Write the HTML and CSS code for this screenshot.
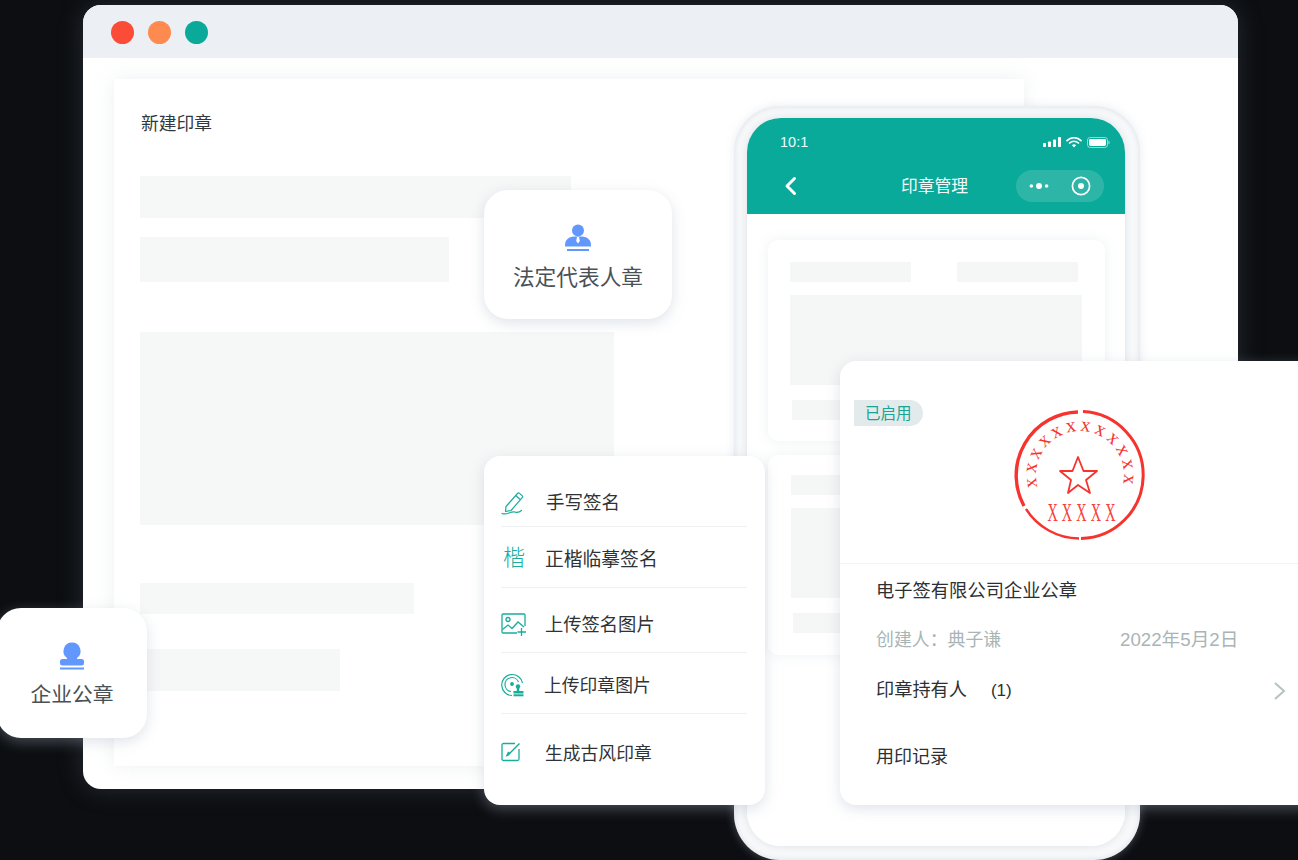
FILE: index.html
```html
<!DOCTYPE html>
<html lang="zh-CN">
<head>
<meta charset="utf-8">
<title>印章管理</title>
<link rel="stylesheet" href="styles.css">
</head>
<body>
<div class="stage">
  <section class="window">
    <header class="titlebar">
      <span class="dot dot-red"></span>
      <span class="dot dot-orange"></span>
      <span class="dot dot-green"></span>
    </header>
    <div class="window-body">
      <div class="form-card">
        <h2 class="form-title">新建印章</h2>
        <div class="skel s1"></div>
        <div class="skel s2"></div>
        <div class="skel s3"></div>
        <div class="skel s4"></div>
        <div class="skel s5"></div>
      </div>
    </div>
  </section>

  <section class="phone">
    <div class="phone-screen">
      <div class="phone-head">
        <div class="status">
          <span class="time">10:1</span>
          <span class="status-icons">
            <svg width="18" height="10" viewBox="0 0 18 10"><rect x="0" y="6" width="3" height="4" rx=".8"/><rect x="5" y="4.500" width="3" height="5.500" rx=".8"/><rect x="10" y="2.500" width="3" height="7.500" rx=".8"/><rect x="15" y="0" width="3" height="10" rx=".8"/></svg>
            <svg width="16" height="11" viewBox="0 0 16 11"><path d="M1 3.600a10 10 0 0 1 14 0M3.600 6a6.400 6.400 0 0 1 8.800 0" fill="none" stroke="#fff" stroke-width="1.700" stroke-linecap="round"/><path d="M5.900 8.300a3 3 0 0 1 4.200 0L8 10.600z"/></svg>
            <svg width="23" height="11" viewBox="0 0 23 11"><rect x=".5" y=".5" width="20" height="10" rx="2.600" fill="none" stroke="#fff" stroke-opacity=".55"/><rect x="2" y="2" width="17" height="7" rx="1.400"/><rect x="21.400" y="3.800" width="1.200" height="3.400" rx=".6" fill-opacity=".55"/></svg>
          </span>
        </div>
        <div class="nav">
          <svg class="back" width="14" height="20" viewBox="0 0 14 20"><path d="M10.500 2.500 3 10l7.500 7.500" fill="none" stroke="#fff" stroke-width="3" stroke-linecap="round" stroke-linejoin="round"/></svg>
          <span class="nav-title">印章管理</span>
          <span class="capsule">
            <svg width="20" height="8" viewBox="0 0 20 8"><circle cx="2.400" cy="4" r="1.800"/><circle cx="10" cy="4" r="3"/><circle cx="17.600" cy="4" r="1.800"/></svg>
            <svg width="20" height="20" viewBox="0 0 20 20"><circle cx="10" cy="10" r="8.600" fill="none" stroke="#fff" stroke-width="1.700"/><circle cx="10" cy="10" r="3"/></svg>
          </span>
        </div>
      </div>
      <div class="phone-body">
        <div class="p-card p-card-a">
          <div class="p-row"><div class="pskel pa1"></div><div class="pskel pa1"></div></div>
          <div class="pskel pa2"></div>
          <div class="pskel pa3"></div>
        </div>
        <div class="p-card p-card-b">
          <div class="pskel pb1"></div>
          <div class="pskel pb2"></div>
          <div class="pskel pb3"></div>
        </div>
      </div>
    </div>
  </section>

  <div class="badge badge-legal">
    <svg class="badge-icon" width="26" height="29" viewBox="0 0 26 29">
      <circle cx="13" cy="6.500" r="6"/>
      <path d="M0 21c0-5 4-8.500 9-8.500h8c5 0 9 3.500 9 8.500v1.500H0z"/>
      <path d="M12 13h2l.8 4-1.800 2.500L11.200 17z" fill="#fff"/>
      <rect x="2" y="25" width="22" height="2"/>
    </svg>
    <span>法定代表人章</span>
  </div>

  <div class="badge badge-corp">
    <svg class="badge-icon" width="24" height="28" viewBox="0 0 24 28">
      <path d="M12 .5a8.500 8.500 0 0 1 5 15.400V17h4.500a2.500 2.500 0 0 1 2.500 2.500V21a2.500 2.500 0 0 1-2.500 2.500h-19A2.500 2.500 0 0 1 0 21v-1.500A2.500 2.500 0 0 1 2.500 17H7v-1.100A8.500 8.500 0 0 1 12 .5z"/>
      <rect y="25.500" width="24" height="2"/>
    </svg>
    <span>企业公章</span>
  </div>

  <nav class="menu">
    <div class="menu-row r1">
      <svg class="mi" width="26" height="24" viewBox="0 0 26 24" fill="none" stroke="#18ad9d" stroke-width="1.200"><path d="M5 15.500 16.500 2.500a1.500 1.500 0 0 1 2.100-.1l2.500 2.200a1.500 1.500 0 0 1 .1 2.100L10 19.500l-5.500 1z" stroke-linejoin="round"/><path d="M14.800 4.500l4.500 4"/><path d="M1 22.500c2.500 1 4.500.5 7-.5s4-1.500 6-1 3.500 1 6.500-1.500" stroke-linecap="round"/></svg>
      <span class="mt t1">手写签名</span>
    </div>
    <div class="menu-row r2">
      <span class="kai">楷</span>
      <span class="mt t2">正楷临摹签名</span>
    </div>
    <div class="menu-row r3">
      <svg class="mi" width="26" height="23" viewBox="0 0 26 23" fill="none" stroke="#18ad9d" stroke-width="1.300"><path d="M16 20H2a1 1 0 0 1-1-1V2a1 1 0 0 1 1-1h21a1 1 0 0 1 1 1v11"/><circle cx="7" cy="6.500" r="2"/><path d="M1.500 16.500 7 12l4 3.500 6-6.500 6 5"/><path d="M20.500 15v8M16.500 19h8.500"/></svg>
      <span class="mt t3">上传签名图片</span>
    </div>
    <div class="menu-row r4">
      <svg class="mi" width="24" height="24" viewBox="0 0 24 24" fill="none" stroke="#18ad9d" stroke-width="1.200"><path d="M11 22.500A10.500 10.500 0 1 1 21.500 10"/><path d="M10 18.500A7 7 0 1 1 17.500 9"/><circle cx="11" cy="11" r="1.300" fill="#18ad9d"/><circle cx="17" cy="13.500" r="2.200" fill="#18ad9d" stroke="none"/><rect x="15.800" y="15" width="2.400" height="3.500" fill="#18ad9d" stroke="none"/><rect x="12.500" y="18" width="10" height="2.500" fill="#18ad9d" stroke="none"/><rect x="12.500" y="21.300" width="10" height="2" fill="#18ad9d" stroke="none"/></svg>
      <span class="mt m4">上传印章图片</span>
    </div>
    <div class="menu-row r5">
      <svg class="mi" width="20" height="20" viewBox="0 0 20 20" fill="none" stroke="#18ad9d" stroke-width="1.300"><path d="M18 7v10a1.500 1.500 0 0 1-1.500 1.500h-14A1.500 1.500 0 0 1 1 17V3a1.500 1.500 0 0 1 1.500-1.500H14"/><path d="M18.500 1.500 8.500 11.500" stroke-width="1.500"/><path d="M9.500 11 7 9.500c-.8 1.500-1.200 3.500-2.500 5 2.200.2 4-.8 5-3.500z" fill="#18ad9d" stroke="none"/></svg>
      <span class="mt m5">生成古风印章</span>
    </div>
  </nav>

  <section class="detail">
    <div class="detail-top">
      <span class="tag">已启用</span>
      <svg class="stamp" width="134" height="134" viewBox="0 0 134 134">
        <defs><path id="stamp-arc" d="M27.100 84.600A44 44 0 1 1 106.900 84.600"/></defs>
        <path d="M65 3A63.500 63.500 0 0 0 11 97" fill="none" stroke="#f7332d" stroke-width="3.400"/>
        <path d="M70 2.600A63.500 63.500 0 0 1 68 129.500" fill="none" stroke="#f7332d" stroke-width="3"/>
        <path d="M13 100A63.500 63.500 0 0 0 66 129.500" fill="none" stroke="#f7332d" stroke-width="2.400"/>
        <text class="stamp-ring"><textPath href="#stamp-arc" startOffset="50%" text-anchor="middle">xxxxxxxxxxxx</textPath></text>
        <path d="M65 48 70.500 62 84 62 73 71 77 84 65 76 55 84 58 71 47 62 59.500 62z" fill="none" stroke="#f7332d" stroke-width="1.800" stroke-linejoin="round"/>
        <text class="stamp-name" transform="translate(70.500 112) scale(.55 1)" text-anchor="middle">XXXXX</text>
      </svg>
    </div>
    <div class="detail-list">
      <div class="d-name">电子签有限公司企业公章</div>
      <div class="d-meta"><span class="d-creator">创建人：典子谦</span><span class="d-date">2022年5月2日</span></div>
      <div class="d-holder">
        <span>印章持有人<span class="count">(1)</span></span>
        <svg width="14" height="20" viewBox="0 0 14 20"><path d="M2 2l9 8-9 8" fill="none" stroke="#b5c2c0" stroke-width="2"/></svg>
      </div>
      <div class="d-log">用印记录</div>
    </div>
  </section>
</div>
</body>
</html>
```
FILE: styles.css
```css
* { box-sizing: border-box; margin: 0; padding: 0; }
html, body { width: 100%; height: 100%; overflow: hidden; background: #0c0e11; }
body { font-family: "Liberation Sans", "Noto Sans CJK SC", sans-serif; }
.stage { position: relative; width: 1298px; height: 860px; overflow: hidden; background: #0c0e11; }

.window {
  position: absolute; left: 83px; top: 5px; width: 1155px; height: 784px;
  border-radius: 18px; overflow: hidden; background: #fff;
  display: flex; flex-direction: column;
  box-shadow: 0 0 24px rgba(70, 80, 95, .45);
}
.titlebar {
  height: 53px; background: #eceff4; flex: none;
  display: flex; align-items: center; gap: 14px; padding: 2px 0 0 28px;
}
.dot { width: 23px; height: 23px; border-radius: 50%; }
.dot-red { background: #fb4c37; }
.dot-orange { background: #fe8a50; }
.dot-green { background: #0aa999; }
.window-body { flex: 1; padding: 21px 214px 23px 31px; }
.form-card {
  height: 100%; background: #fff; padding: 33px 0 0 26px;
  box-shadow: 0 0 18px rgba(190, 200, 210, .28);
  display: flex; flex-direction: column; align-items: flex-start;
}
.form-title { font-size: 17.800px; line-height: 24px; font-weight: 400; color: #33383c; padding-left: 1px; }
.skel { background: #f6f7f7; }
.s1 { width: 431px; height: 42px; margin-top: 40px; }
.s2 { width: 309px; height: 45px; margin-top: 19px; }
.s3 { width: 474px; height: 193px; margin-top: 50px; }
.s4 { width: 274px; height: 31px; margin-top: 58px; }
.s5 { width: 200px; height: 42px; margin-top: 35px; }

.phone {
  position: absolute; left: 734px; top: 106px; width: 406px; height: 754px;
  padding: 12px 15px 14px 13px; background: #f9fafb; border-radius: 46px;
  box-shadow: inset 0 0 6px rgba(190, 200, 212, .55), 0 0 10px rgba(190, 200, 212, .35);
}
.phone-screen {
  height: 100%; border-radius: 34px; overflow: hidden; background: #fff;
  display: flex; flex-direction: column;
  box-shadow: 0 0 10px rgba(190, 200, 212, .5);
}
.phone-head { height: 96px; background: #0aaa9a; flex: none; color: #fff; padding: 15px 15px 0 33px; }
.status { display: flex; justify-content: space-between; align-items: center; height: 18px; }
.time { font-size: 14.500px; color: #f2fbfa; }
.status-icons { display: flex; align-items: center; gap: 5px; }
.status-icons svg { fill: #fff; }
.nav { position: relative; display: flex; align-items: center; justify-content: space-between; margin-top: 19px; height: 32px; padding-left: 4px; }
.back { display: block; }
.nav-title { position: absolute; left: 121px; top: 6px; font-size: 16.800px; line-height: 22px; color: #f4fcfb; }
.capsule {
  width: 88px; height: 32px; border-radius: 16px; background: #2db6a8;
  display: flex; align-items: center; gap: 22px; padding-left: 13px; margin-right: 6px;
}
.capsule svg { fill: #fff; display: block; }
.phone-body { flex: 1; background: #fff; padding: 26px 20px 0 21px; display: flex; flex-direction: column; gap: 14px; }
.p-card { border-radius: 10px; background: #fff; box-shadow: 0 0 12px rgba(190, 200, 212, .28); }
.p-card-a { height: 201px; padding: 22px 23px 0 22px; }
.p-card-b { height: 200px; padding: 20px 23px 0 23px; }
.p-row { display: flex; justify-content: space-between; width: 288px; }
.pskel { background: #f5f6f6; }
.pa1 { width: 121px; height: 20px; }
.pa2 { width: 292px; height: 90px; margin-top: 13px; }
.pa3 { width: 292px; height: 20px; margin: 15px 0 0 2px; }
.pb1 { width: 290px; height: 20px; }
.pb2 { width: 290px; height: 90px; margin-top: 13px; }
.pb3 { width: 290px; height: 20px; margin: 15px 0 0 2px; }

.badge {
  position: absolute; background: #fff; border-radius: 24px;
  display: flex; flex-direction: column; align-items: center;
  color: #4a5156; box-shadow: 0 4px 14px rgba(170, 182, 196, .38);
}
.badge-icon { fill: #6298fd; display: block; }
.badge-legal { left: 484px; top: 190px; width: 188px; height: 129px; padding-top: 34px; font-size: 21.700px; }
.badge-legal span { margin-top: 10px; line-height: 30px; }
.badge-corp { left: -3px; top: 608px; width: 150px; height: 130px; padding-top: 34px; font-size: 20.800px; }
.badge-corp span { margin-top: 11px; line-height: 28px; }

.menu {
  position: absolute; left: 484px; top: 456px; width: 281px; height: 349px;
  background: #fff; border-radius: 16px; padding: 0 18px 0 17px;
  box-shadow: 0 4px 14px rgba(170, 182, 196, .38);
  display: flex; flex-direction: column;
}
.menu-row { display: flex; align-items: center; color: #2f3336; font-size: 17.800px; position: relative; }
.menu-row + .menu-row { border-top: 1px solid #f0f1f3; }
.r1 { height: 70px; padding-top: 24px; }
.r2 { height: 61px; padding-bottom: 4px; }
.r3 { height: 65px; padding-top: 9px; }
.r4 { height: 61px; padding-top: 4px; }
.r5 { height: 78px; padding-bottom: 1px; }
.mi { flex: none; display: block; }
.mt { position: absolute; left: 44px; white-space: nowrap; line-height: 26px; }
.t1 { left: 45px; font-size: 18.500px; top: 34px; }
.t2 { font-size: 18.800px; top: 20px; }
.t3 { font-size: 18.300px; top: 24px; }
.m4 { left: 43px; top: 20px; }
.m5 { top: 27px; }
.kai { font-family: "Noto Sans CJK SC", sans-serif; font-weight: 300; color: #18ad9d; font-size: 22px; margin-left: 2px; }

.detail {
  position: absolute; left: 840px; top: 361px; width: 480px; height: 444px;
  background: #fff; border-radius: 16px;
  box-shadow: 0 4px 14px rgba(170, 182, 196, .38);
  display: flex; flex-direction: column;
}
.detail-top { position: relative; height: 203px; border-bottom: 1px solid #f2f3f4; }
.tag {
  position: absolute; left: 14px; top: 39px; width: 69px; height: 26px;
  background: #e3eaec; border-radius: 0 13px 13px 0;
  color: #17a595; font-size: 15.500px; line-height: 27px; padding-left: 11px;
}
.stamp { position: absolute; left: 173px; top: 48px; }
.stamp-ring { font-family: "Liberation Serif", serif; font-size: 20px; letter-spacing: 3.500px; fill: #f7332d; }
.stamp-name { font-family: "Liberation Serif", serif; font-size: 26px; letter-spacing: 7.500px; fill: #f7423c; }
.detail-list { padding: 14px 0 0 36px; width: 458px; }
.d-name { font-size: 18.300px; line-height: 26px; color: #2c3033; }
.d-meta { margin-top: 24px; line-height: 24px; color: #a9b5b5; display: flex; }
.d-creator { width: 244px; font-size: 17.900px; }
.d-date { font-size: 18.700px; }
.d-holder { margin-top: 25px; display: flex; justify-content: space-between; align-items: center; font-size: 18.200px; line-height: 26px; color: #2c3033; padding-right: 11px; }
.count { margin-left: 24px; font-size: 17px; }
.d-log { margin-top: 40px; font-size: 18px; line-height: 26px; color: #2c3033; }
```
